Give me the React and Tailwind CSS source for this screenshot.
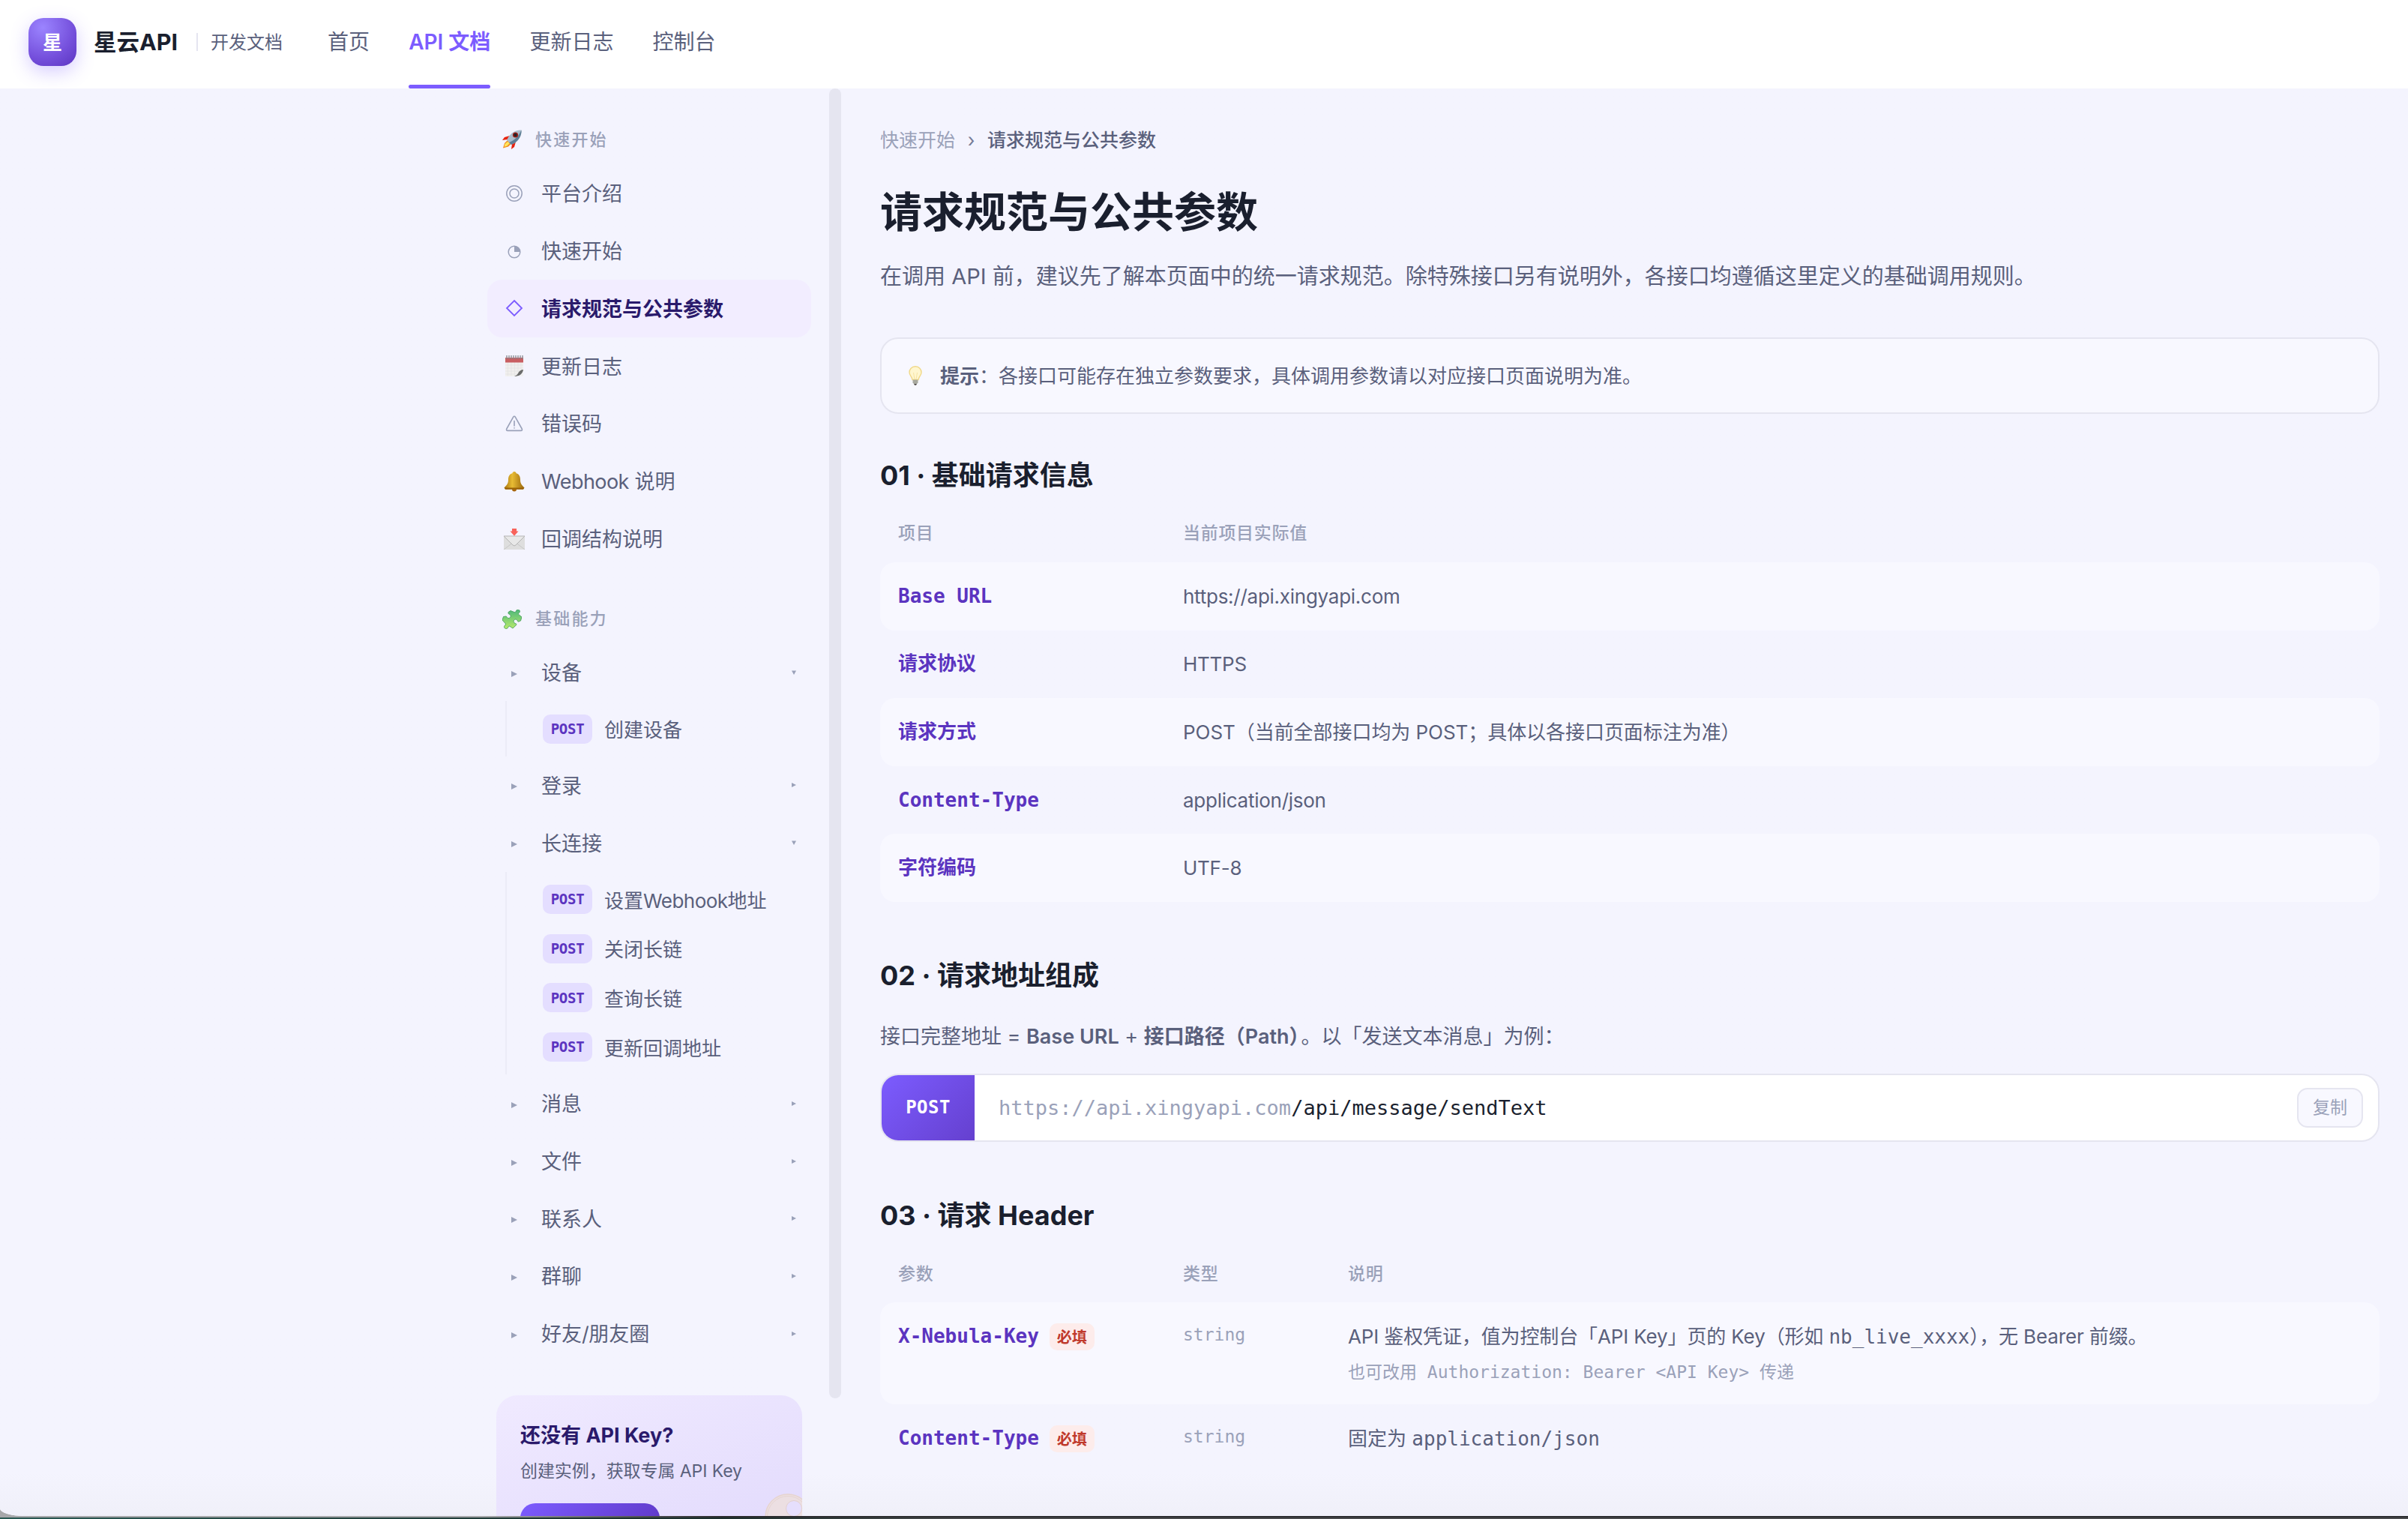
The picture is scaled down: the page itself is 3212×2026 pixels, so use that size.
const TOP_LINKS = [
  { label: '首页' },
  { label: 'API 文档', active: true },
  { label: '更新日志' },
  { label: '控制台' },
];

const Rocket = () => (
  <svg viewBox="0 0 26 26" className="size-[26px]">
    <path d="M10 8 3 10 0 14l7-1zM18 16l-2 7-4 3 1-7z" fill="#e8230f" />
    <path d="M7 14 3 18 1 24.500l7-2 4-4z" fill="#f08a1c" />
    <path d="M7 16l-3.500 3-1 4 4-1.500L10 18z" fill="#ffe65c" />
    <path d="M25.500.500C18 0 12 4 8 10l-2 4 6 6 4-2C22 14 26 8 25.500.500z" fill="#a9bccb" />
    <path d="M25.500.500C26 8 22 14 16 18l-4 2-3-3C17 14 22 8 25.500.500z" fill="#5f7f96" />
    <circle cx="17.500" cy="7" r="3.600" fill="#a31b12" />
    <circle cx="17.500" cy="7" r="2.200" fill="#20232c" />
  </svg>
);

const Puzzle = () => (
  <svg viewBox="0 0 26 26" className="size-[26px]">
    <defs>
      <linearGradient id="puzzle" x1="0" y1="0" x2="0" y2="1">
        <stop offset="0" stopColor="#4fb87a" />
        <stop offset="1" stopColor="#b6ea6c" />
      </linearGradient>
    </defs>
    <path
      d="M8 3.500 11 1.500l5 2c1.500.500 2-.5 2.500-2 1-2 5-1.500 5 1 0 2-2.500 2-2 3.800L26 10l-1.500 5-3 1.200c-1.500 0-1-3-3.500-3.200-2.500 0-3.800 3-2 4.800 1.500 1.200 3.500.7 2.800 2.700L14 25l-4-2.700c-1.500-.8-1.800.700-2.500 2C6 26.500 2 25.500 2.500 22.500c.5-2 2.500-1.500 2-3.500L0 14l1.500-4.500L5 9c1.500.3 1.500 3 4 2.500 2.500-.8 2.800-3.800 1-5C8.500 6 7.500 5.500 8 3.500z"
      fill="url(#puzzle)"
      stroke="#3f9a55"
      strokeWidth=".8"
    />
  </svg>
);

const Rings = () => (
  <svg viewBox="0 0 24 24" className="size-6" fill="none" stroke="#9aa1b9" strokeWidth="1.500">
    <circle cx="12" cy="12" r="10.200" />
    <circle cx="12" cy="12" r="6" />
  </svg>
);

const Pie = () => (
  <svg viewBox="0 0 24 24" className="size-6">
    <circle cx="12" cy="13" r="7.800" fill="none" stroke="#9aa1b9" strokeWidth="1.500" />
    <path d="M12 5.200v7.800h7.800A7.800 7.800 0 0 0 12 5.200z" fill="#9aa1b9" />
  </svg>
);

const Diamond = () => (
  <svg viewBox="0 0 24 24" className="size-6">
    <path d="M12 2 22 12 12 22 2 12z" fill="none" stroke="#7c5cff" strokeWidth="1.800" />
  </svg>
);

const Notepad = () => (
  <svg viewBox="0 0 28 30" className="h-[30px] w-7">
    <path d="M2 5h24v17l-9 7H2z" fill="#f1f0ee" />
    <path d="M5.500 10v18M10 10v18M14.500 10v18M19 10v14M23 10v10M2 14h24M2 18h24M2 22h21M2 26h17" stroke="#e2e1e2" strokeWidth=".7" />
    <path d="M2 4h24v6.500H2z" fill="#c95f62" />
    <path d="M26 20c-3 0-6 2-7 5-1 2-3 3-5 4 6 0 11-2 12-9z" fill="#6b6c6b" />
    <path d="M26 22c-2 4-5 7-10 7h10z" fill="#f1f0f2" />
    <path d="M4 1v5M7 1v5M10 1v5M13 1v5M16 1v5M19 1v5M22 1v5M25 1v5" stroke="#85868c" strokeWidth="1.300" />
  </svg>
);

const Warning = () => (
  <svg viewBox="0 0 24 24" className="size-6" fill="none" stroke="#9aa1b9" strokeWidth="1.600" strokeLinejoin="round" strokeLinecap="round">
    <path d="M10.700 3.200 1.800 19c-.7 1.500 0 2.400 1.300 2.400h17.800c1.300 0 2-.9 1.300-2.400L13.300 3.200c-.7-1.200-1.900-1.200-2.600 0z" />
    <path d="M12 8.500v6.500M12 17.800v.2" />
  </svg>
);

const Bell = () => (
  <svg viewBox="0 0 28 28" className="size-7">
    <defs>
      <linearGradient id="bell" x1="0" y1="0" x2="1" y2="0">
        <stop offset="0" stopColor="#a87410" />
        <stop offset=".4" stopColor="#e8bc34" />
        <stop offset="1" stopColor="#9a660c" />
      </linearGradient>
    </defs>
    <circle cx="14" cy="24.500" r="3" fill="#a8640c" />
    <path d="M14 1c1.500 0 2.500 1 2.500 2.200C21 4.500 22 8 22 12c0 5 2 7 5.500 10.500L26 24.500H2L.5 22.500C4 19 6 17 6 12c0-4 1-7.500 5.500-8.800C11.500 2 12.500 1 14 1z" fill="url(#bell)" />
    <path d="M.8 22.500h26.400l-1.200 2.300H2z" fill="#9a6208" />
  </svg>
);

const Mail = () => (
  <svg viewBox="0 0 28 28" className="size-7">
    <path d="M0 10h28v18H0z" fill="#dedede" />
    <path d="M0 10h28L16 22q-2 2-4 0z" fill="#e8e8e8" stroke="#b4b4b4" strokeWidth="1" />
    <path d="M0 28 10.500 20M28 28 17.500 20" stroke="#c6c6c6" strokeWidth="1" />
    <path d="M11 0h6v3.500h2.500L14 9.800 8.500 3.500H11z" fill="#f8625a" />
  </svg>
);

const Bulb = () => (
  <svg viewBox="0 0 18 26" className="h-[26px] w-[18px]">
    <path d="M9 .8C4 .8 1 4.500 1 8.800c0 4 3.500 5.500 4 9.700h8c.5-4.200 4-5.700 4-9.700C17 4.500 14 .8 9 .8z" fill="#fff6cf" stroke="#f0d888" strokeWidth="1.400" />
    <path d="M6.500 9 8 18M11.500 9 10 18" stroke="#f5de96" strokeWidth=".8" />
    <path d="M5.500 18.500h7v4l-1.500 1.500H7L5.500 22.500z" fill="#a9a99f" />
    <path d="M7 24h4l-1 1.800H8z" fill="#4f4a48" />
  </svg>
);

const KeyArt = () => (
  <svg viewBox="0 0 70 70" className="absolute -right-[20px] top-[131px] size-[70px]">
    <circle cx="31" cy="31" r="30" fill="#ecdfe2" stroke="#e6d4cf" strokeWidth="1.500" />
    <circle cx="31" cy="31" r="27.500" fill="none" stroke="#e5d3d0" strokeWidth="1" />
    <circle cx="39" cy="20" r="10.500" fill="#e6dffd" stroke="#e3d0cd" strokeWidth="1" />
  </svg>
);

const Triangle = ({ open, small }) => (
  <svg viewBox="0 0 8 8" className={small ? 'size-[6px]' : 'size-2'}>
    <path d={open ? 'M0 .5h8L4 8z' : 'M0 0 8 4 0 8z'} fill="#9aa1b9" />
  </svg>
);

const GUIDES = [
  { icon: <Rings />, label: '平台介绍' },
  { icon: <Pie />, label: '快速开始' },
  { icon: <Diamond />, label: '请求规范与公共参数', active: true },
  { icon: <Notepad />, label: '更新日志' },
  { icon: <Warning />, label: '错误码' },
  { icon: <Bell />, label: 'Webhook 说明' },
  { icon: <Mail />, label: '回调结构说明' },
];

const GROUPS = [
  { label: '设备', items: ['创建设备'] },
  { label: '登录' },
  { label: '长连接', items: ['设置Webhook地址', '关闭长链', '查询长链', '更新回调地址'] },
  { label: '消息' },
  { label: '文件' },
  { label: '联系人' },
  { label: '群聊' },
  { label: '好友/朋友圈' },
];

const BASE_INFO = [
  { name: 'Base URL', value: 'https://api.xingyapi.com', latin: true },
  { name: '请求协议', value: 'HTTPS', latin: true },
  { name: '请求方式', value: 'POST（当前全部接口均为 POST；具体以各接口页面标注为准）' },
  { name: 'Content-Type', value: 'application/json', latin: true },
  { name: '字符编码', value: 'UTF-8', latin: true },
];

const MONO = "font-['DejaVu_Sans_Mono','Noto_Sans_CJK_SC',monospace]";

function Label({ children }) {
  return (
    <span className="pt-[3px]">
      {children.split(/([A-Za-z/]+)/).map((part, i) =>
        i % 2 ? (
          <span key={i} className="tracking-[-0.02em]">
            {part}
          </span>
        ) : (
          part
        )
      )}
    </span>
  );
}

function Header() {
  return (
    <header className="flex h-[118px] shrink-0 bg-white pl-[38px]">
      <div className="flex h-28 items-center">
        <div className="flex size-16 items-center justify-center rounded-[20px] bg-[radial-gradient(circle_at_30%_20%,#9b84ff,#7550dc_60%,#5b34c0)] text-[26px] font-bold text-white shadow-[0_8px_24px_rgba(124,92,255,0.3)]">
          星
        </div>
        <span className="ml-[23px] text-[30.5px] font-bold text-[#1a1f2e]">星云API</span>
        <span className="ml-[25px] h-6 w-0.5 bg-[#e5e5f0]" />
        <span className="ml-[17px] pt-0.5 text-2xl text-[#5a607c]">开发文档</span>
      </div>
      <nav className="ml-[60px] flex gap-[52px] text-[28px] text-[#5a607c]">
        {TOP_LINKS.map((link) => (
          <a key={link.label} className={link.active ? 'flex flex-col justify-between font-semibold text-[#7c5cff]' : 'flex flex-col'}>
            <span className="flex h-28 items-center">{link.label}</span>
            {link.active && <span className="-mt-1 h-[5px] rounded-full bg-[#7c5cff]" />}
          </a>
        ))}
      </nav>
    </header>
  );
}

function SectionLabel({ icon, children }) {
  return (
    <div className="flex h-8 items-center pl-5 text-[22px] font-medium tracking-[0.1em] text-[#9aa1b9]">
      <span className="flex w-[44px]">{icon}</span>
      {children}
    </div>
  );
}

function Sidebar() {
  return (
    <aside className="flex w-[456px] shrink-0 flex-col pt-[52px]">
      <SectionLabel icon={<Rocket />}>快速开始</SectionLabel>
      <div className="mt-[17.500px] flex w-[432px] flex-col">
        {GUIDES.map((g) => (
          <a
            key={g.label}
            className={
              g.active
                ? 'flex h-[76.8px] items-center rounded-[20px] bg-[#f2edff] text-[27px] font-semibold text-[#2a1a6b]'
                : 'flex h-[76.8px] items-center text-[27px] text-[#5a607c]'
            }
          >
            <span className="flex w-[72px] justify-center">{g.icon}</span>
            <Label>{g.label}</Label>
          </a>
        ))}
      </div>
      <div className="mt-[52.500px]">
        <SectionLabel icon={<Puzzle />}>基础能力</SectionLabel>
      </div>
      <div className="mt-[17px] flex w-[432px] flex-col">
        {GROUPS.map((group) => (
          <div key={group.label}>
            <a className="flex h-[76.8px] items-center text-[27px] text-[#5a607c]">
              <span className="flex w-[72px] justify-center pt-1">
                <Triangle />
              </span>
              <Label>{group.label}</Label>
              <span className="ml-auto mr-[20px]">
                <Triangle open={Boolean(group.items)} small />
              </span>
            </a>
            {group.items && (
              <div className="ml-6 flex flex-col border-l-2 border-[#ececf7] py-1">
                {group.items.map((item) => (
                  <a key={item} className="flex h-[65.7px] items-center pl-12 text-[26px] text-[#5a607c]">
                    <span className={`${MONO} mr-4 flex h-[39px] w-[66px] items-center justify-center rounded-[10px] bg-[#e4deff] text-[19px] font-bold tracking-[-0.3px] text-[#5b34c0]`}>
                      POST
                    </span>
                    <Label>{item}</Label>
                  </a>
                ))}
              </div>
            )}
          </div>
        ))}
      </div>
      <div className="relative ml-3 mt-[44px] h-[240px] w-[408px] shrink-0 overflow-hidden rounded-[28px] bg-linear-160 from-[#f0eaff] to-[#e0d8fc] px-8 pt-8">
        <div className="flex h-11 items-center text-[27px] font-bold text-[#2a1a6b]">还没有 API Key?</div>
        <div className="mt-[3px] flex h-11 items-center text-[23px] tracking-[-0.003em] text-[#5a607c]">创建实例，获取专属 API Key</div>
        <div className="mt-[21px] h-16 w-[186px] rounded-[20px] bg-linear-135 from-[#7c5cff] to-[#5b34c0]" />
        <KeyArt />
      </div>
    </aside>
  );
}

function Heading({ children }) {
  return <h2 className="flex h-12 items-center pt-0.5 text-[36px] font-bold text-[#1a1f2e]">{children}</h2>;
}

function Required() {
  return (
    <span className="ml-3.5 flex h-9 w-[60px] items-center justify-center rounded-[10px] bg-[#fdeceb] pt-0.5 font-['Inter','Noto_Sans_CJK_SC',sans-serif] text-[20px] font-bold text-[#c0392b]">
      必填
    </span>
  );
}

function Main() {
  return (
    <main className="ml-[52px] flex w-[2000px] flex-col pt-[50px] text-[26px] text-[#5a607c]">
      <div className="flex h-9 items-center pt-[3px] text-[25px]">
        <span className="text-[#9aa1b9]">快速开始</span>
        <span className="mx-4 w-[11px] text-center text-[#757b96]">›</span>
        <span className="font-medium">请求规范与公共参数</span>
      </div>
      <h1 className="mt-[39px] flex h-20 items-center text-[56px] font-bold text-[#1a1f2e]">请求规范与公共参数</h1>
      <p className="mt-[24px] flex h-[42px] items-center pt-px text-[29px]">
        在调用 API 前，建议先了解本页面中的统一请求规范。除特殊接口另有说明外，各接口均遵循这里定义的基础调用规则。
      </p>
      <div className="mt-[61px] flex h-[102px] items-center rounded-3xl border-2 border-[#e5e5f0] bg-[#f8f8ff] pl-[36px]">
        <Bulb />
        <p className="ml-[24px]">
          <strong className="font-semibold">提示</strong>：各接口可能存在独立参数要求，具体调用参数请以对应接口页面说明为准。
        </p>
      </div>

      <div className="mt-[57px]">
        <Heading>01 · 基础请求信息</Heading>
      </div>
      <div className="mt-[33px] grid h-[42px] grid-cols-[380px_1fr] items-center pl-6 text-[23px] font-medium tracking-[0.03em] text-[#9aa1b9]">
        <span>项目</span>
        <span>当前项目实际值</span>
      </div>
      <div className="mt-[18px] flex flex-col">
        {BASE_INFO.map(({ name, value, latin }) => (
          <div key={name} className="grid h-[90.6px] grid-cols-[380px_1fr] items-center rounded-[20px] pl-6 odd:bg-[#f8f8ff]">
            <span className={`${MONO} font-bold text-[#5b34c0]`}>{name}</span>
            <span className={latin ? 'tracking-[-0.01em]' : 'tracking-[-0.002em]'}>{value}</span>
          </div>
        ))}
      </div>

      <div className="mt-[73px]">
        <Heading>02 · 请求地址组成</Heading>
      </div>
      <p className="mt-[38px] flex h-10 items-center whitespace-pre pt-[3px] text-[27px]">
        接口完整地址 = <strong className="font-semibold">Base URL</strong> + <strong className="font-semibold">接口路径（Path）</strong>
        <span className="-ml-[11px]">。以「发送文本消息」为例：</span>
      </p>
      <div className={`${MONO} mt-[30px] flex h-[91px] items-center overflow-hidden rounded-3xl border-2 border-[#e5e5f0] bg-white`}>
        <span className="flex h-full w-[124px] items-center justify-center bg-linear-135 from-[#7c5cff] to-[#6540cf] text-2xl font-bold tracking-[0.02em] text-white">POST</span>
        <span className="ml-8 pt-0.5 text-[27px] text-[#1a1f2e]">
          <span className="text-[#9aa1b9]">https://api.xingyapi.com</span>/api/message/sendText
        </span>
        <button className="ml-auto mr-5 h-[53px] w-[88px] rounded-[14px] border-2 border-[#e5e5f0] bg-[#f8f8ff] font-['Inter','Noto_Sans_CJK_SC',sans-serif] text-[23px] text-[#9aa1b9]">
          复制
        </button>
      </div>

      <div className="mt-[73px]">
        <Heading>03 · 请求 Header</Heading>
      </div>
      <div className="mt-[34px] grid h-[42px] grid-cols-[380px_220px_1fr] items-center pl-6 text-[23px] font-medium tracking-[0.03em] text-[#9aa1b9]">
        <span>参数</span>
        <span>类型</span>
        <span>说明</span>
      </div>
      <div className="mt-[17px] grid h-[136px] grid-cols-[380px_220px_1fr] rounded-[20px] bg-[#f8f8ff] pl-6 pt-[24px]">
        <div className={`${MONO} flex h-11 items-center font-bold text-[#5b34c0]`}>
          X-Nebula-Key
          <Required />
        </div>
        <div className={`${MONO} flex h-[38px] items-center text-[23px] text-[#9aa1b9]`}>string</div>
        <div>
          <p className="h-11 leading-[44px] tracking-[-0.005em]">
            API 鉴权凭证，值为控制台「API Key」页的 Key（形如 <code className={`${MONO} tracking-normal`}>nb_live_xxxx</code>），无 Bearer 前缀。
          </p>
          <p className={`${MONO} mt-[3px] h-11 text-[23px] leading-[44px] text-[#9aa1b9]`}>也可改用 Authorization: Bearer &lt;API Key&gt; 传递</p>
        </div>
      </div>
      <div className="grid h-[90px] grid-cols-[380px_220px_1fr] pl-6 pt-[24px]">
        <div className={`${MONO} flex h-11 items-center font-bold text-[#5b34c0]`}>
          Content-Type
          <Required />
        </div>
        <div className={`${MONO} flex h-[38px] items-center text-[23px] text-[#9aa1b9]`}>string</div>
        <p className="h-11 leading-[44px]">
          固定为 <code className={MONO}>application/json</code>
        </p>
      </div>
    </main>
  );
}

export default function App() {
  return (
    <div className="flex h-[2026px] w-[3212px] flex-col overflow-hidden bg-[#a6a7a9] font-['Inter','Noto_Sans_CJK_SC',sans-serif] leading-normal">
      <div className="flex h-[2022px] flex-col overflow-hidden rounded-bl-[32px_10px] bg-[#f4f4fe]">
        <Header />
        <div className="flex min-h-0 flex-1 bg-linear-to-b from-[#f4f4fe] from-97% to-[#f0f0f9] pl-[650px]">
          <Sidebar />
          <div className="h-[1747px] w-4 shrink-0 rounded-full bg-[#e5e5f0]" />
          <Main />
        </div>
      </div>
      <div className="h-0.5 bg-linear-to-r from-[#a6a7a9] from-20% to-[#2a2b2d] to-30%" />
      <div className="h-0.5 bg-linear-to-r from-[#2a5a54] via-[#1c2f2c] via-30% to-[#4a4b4d] to-40%" />
    </div>
  );
}
